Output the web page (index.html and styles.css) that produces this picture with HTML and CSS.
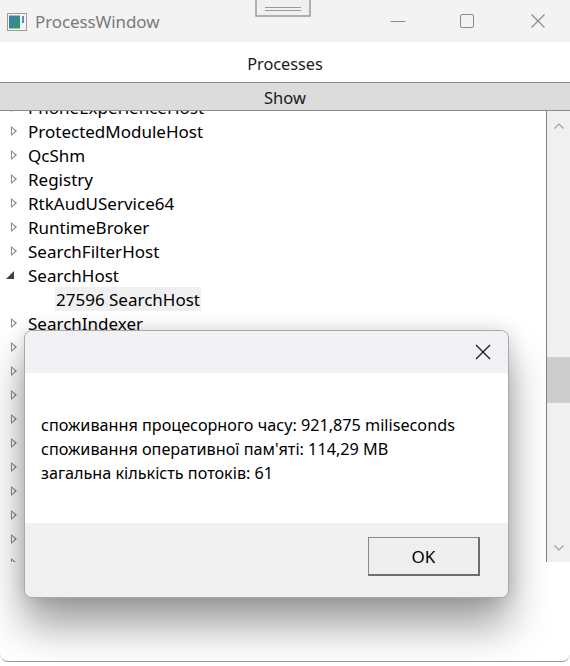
FILE: index.html
```html
<!DOCTYPE html>
<html>
<head>
<meta charset="utf-8">
<link rel="stylesheet" href="styles.css">
</head>
<body>
<div class="window">
  <div class="titlebar">
    <div class="app-icon">
      <svg width="20" height="18" viewBox="0 0 20 18">
        <rect x="0.5" y="0.5" width="19" height="17" fill="#f4f4f4" stroke="#9a9a9a"/>
        <defs><linearGradient id="g" x1="0" y1="0" x2="1" y2="1"><stop offset="0" stop-color="#3b7fb8"/><stop offset="1" stop-color="#2f9a5a"/></linearGradient></defs>
        <rect x="2" y="2.5" width="11" height="13" fill="url(#g)"/>
        <rect x="15" y="3" width="2" height="7" fill="#5a8fc0"/>
      </svg>
    </div>
    <div class="title">ProcessWindow</div>
    <div class="controls">
      <div class="ctl min"><svg width="16" height="16" viewBox="0 0 16 16"><path d="M0.5 8.5h15" stroke="#8a8a8a" stroke-width="1"/></svg></div>
      <div class="ctl max"><svg width="16" height="16" viewBox="0 0 16 16"><rect x="1.5" y="1.5" width="13" height="13" rx="1.5" fill="none" stroke="#8a8a8a" stroke-width="1"/></svg></div>
      <div class="ctl close"><svg width="16" height="16" viewBox="0 0 16 16"><path d="M1.5 1.5l13 13M14.5 1.5l-13 13" stroke="#8a8a8a" stroke-width="1.1"/></svg></div>
    </div>
  </div>
  <div class="snap">
    <svg width="56" height="18" viewBox="0 0 56 18"><rect x="1" y="-2" width="54" height="18" fill="#f0f0f3" stroke="#9a9a9a" stroke-width="1.5"/><path d="M10 7.5h36M10 10.5h36" stroke="#9a9a9a" stroke-width="1.2"/></svg>
  </div>
  <div class="header">Processes</div>
  <div class="showbtn">Show</div>
  <div class="main">
    <div class="tree">
      <div class="rows">
        <div class="row"><span class="exp"></span>PhoneExperienceHost</div>
        <div class="row"><span class="exp"></span>ProtectedModuleHost</div>
        <div class="row"><span class="exp"></span>QcShm</div>
        <div class="row"><span class="exp"></span>Registry</div>
        <div class="row"><span class="exp"></span>RtkAudUService64</div>
        <div class="row"><span class="exp"></span>RuntimeBroker</div>
        <div class="row"><span class="exp"></span>SearchFilterHost</div>
        <div class="row"><span class="exp open"></span>SearchHost</div>
        <div class="row child"><span class="sel">27596 SearchHost</span></div>
        <div class="row"><span class="exp"></span>SearchIndexer</div>
        <div class="row"><span class="exp"></span></div>
        <div class="row"><span class="exp"></span></div>
        <div class="row"><span class="exp"></span></div>
        <div class="row"><span class="exp"></span></div>
        <div class="row"><span class="exp"></span></div>
        <div class="row"><span class="exp"></span></div>
        <div class="row"><span class="exp"></span></div>
        <div class="row"><span class="exp"></span></div>
        <div class="row"><span class="exp"></span></div>
        <div class="row"><span class="exp"></span></div>
        <div class="row"><span class="exp"></span></div>
      </div>
    </div>
    <div class="scrollbar">
      <div class="arrow up"><svg width="10" height="6" viewBox="0 0 10 6"><path d="M0.5 5.5L5 1l4.5 4.5" fill="none" stroke="#a0a0a0" stroke-width="1.1"/></svg></div>
      <div class="track">
        <div class="thumb"></div>
      </div>
      <div class="arrow down"><svg width="10" height="6" viewBox="0 0 10 6"><path d="M0.5 0.5L5 5l4.5-4.5" fill="none" stroke="#a0a0a0" stroke-width="1.1"/></svg></div>
    </div>
  </div>
  <div class="filler"></div>

  <div class="dialog">
    <div class="dlg-title">
      <div class="dlg-close"><svg width="16" height="16" viewBox="0 0 16 16"><path d="M1 1l14 14M15 1L1 15" stroke="#1a1a1a" stroke-width="1.3"/></svg></div>
    </div>
    <div class="dlg-body">
      <div>споживання процесорного часу: 921,875 miliseconds</div>
      <div>споживання оперативної пам'яті: 114,29 MB</div>
      <div>загальна кількість потоків: 61</div>
    </div>
    <div class="dlg-foot">
      <div class="okbtn">OK</div>
    </div>
  </div>
</div>
</body>
</html>
```
FILE: styles.css
```css
* { box-sizing: border-box; }
html, body { margin: 0; padding: 0; background: #ffffff; }
body {
  font-family: "Noto Sans", "Open Sans", sans-serif;
  font-size: 15px;
  color: #000;
  width: 570px;
  height: 666px;
  overflow: hidden;
}
.window {
  position: relative;
  width: 570px;
  height: 662px;
  border-bottom: 1px solid #9a9a9a;
  border-radius: 0 0 8px 8px;
  background: #ffffff;
  display: flex;
  flex-direction: column;
  overflow: hidden;
}
.titlebar {
  height: 42px;
  flex: none;
  background: #f3f3f3;
  display: flex;
  align-items: center;
}
.app-icon { width: 20px; height: 18px; margin-left: 7px; margin-top: 1px; display: flex; }
.title {
  margin-left: 8px;
  font-size: 17px;
  color: #7a7a7a;
  letter-spacing: -0.1px;
}
.controls { margin-left: auto; display: flex; height: 42px; }
.ctl { width: 46px; height: 42px; display: flex; align-items: center; justify-content: center; }
.ctl.min { margin-right: 23px; }
.ctl.max { margin-right: 25px; }
.ctl.close { margin-right: 9px; }
.snap { position: absolute; left: 255px; top: 0; width: 56px; height: 18px; }
.header {
  height: 40px;
  flex: none;
  display: flex;
  align-items: center;
  justify-content: center;
  padding-top: 4px;
  font-size: 16.3px;
  color: #1a1a1a;
}
.showbtn {
  height: 29px;
  flex: none;
  background: #dcdcdc;
  border-top: 1px solid #8c8c8c;
  border-bottom: 1px solid #8c8c8c;
  display: flex;
  align-items: center;
  justify-content: center;
  padding-top: 2px;
  font-size: 16.5px;
  color: #1a1a1a;
}
.main {
  height: 451px;
  flex: none;
  display: flex;
}
.tree { flex: 1; overflow: hidden; position: relative; }
.rows { margin-top: -16px; }
.row {
  height: 24px;
  display: flex;
  align-items: center;
  padding-left: 11px;
  font-size: 17px;
  white-space: nowrap;
  color: #000;
}
.exp {
  width: 0; height: 0;
  margin-right: 11px;
  position: relative;
  border-top: 5px solid transparent;
  border-bottom: 5px solid transparent;
  border-left: 6px solid #8a8a8a;
}
.exp::after {
  content: "";
  position: absolute;
  left: -5px; top: -3px;
  border-top: 3px solid transparent;
  border-bottom: 3px solid transparent;
  border-left: 3.6px solid #ffffff;
}
.exp.open {
  border: none;
  width: 8px; height: 8px;
  margin-left: -5px;
  margin-right: 14px;
  background: #404040;
  clip-path: polygon(100% 0, 100% 100%, 0 100%);
}
.exp.open::after { display: none; }
.row.child { padding-left: 55px; }
.sel {
  background: #f0f0f0;
  height: 24px;
  display: flex;
  align-items: center;
  padding: 0 1px;
}
.scrollbar {
  width: 24px;
  flex: none;
  border-left: 1px solid #828282;
  background: #f0f0f0;
  display: flex;
  flex-direction: column;
}
.arrow { height: 28px; display: flex; align-items: center; justify-content: center; flex: none; }
.arrow.up { padding-top: 2px; }
.track { flex: 1; position: relative; }
.thumb { position: absolute; left: 0; right: 0; top: 218px; height: 46px; background: #cdcdcd; }
.filler { flex: 1; }

.dialog {
  position: absolute;
  left: 24px;
  top: 330px;
  width: 485px;
  height: 268px;
  border: 1px solid #a8a8a8;
  border-radius: 8px;
  overflow: hidden;
  display: flex;
  flex-direction: column;
  box-shadow: 0 28px 42px rgba(0,0,0,0.38), 0 0 18px rgba(0,0,0,0.14);
  background: #f0f0f0;
}
.dlg-title {
  height: 42px;
  flex: none;
  background: #f1f1f6;
  display: flex;
  align-items: center;
  justify-content: flex-end;
  padding-right: 17px;
}
.dlg-close { width: 16px; height: 16px; display: flex; }
.dlg-body {
  height: 150px;
  flex: none;
  background: #ffffff;
  padding: 40px 0 0 16px;
  font-size: 16.2px;
  line-height: 24px;
  color: #000;
}
.dlg-foot {
  flex: 1;
  background: #f0f0f0;
  display: flex;
  justify-content: flex-end;
  padding: 14px 28px 0 0;
}
.okbtn {
  width: 112px;
  height: 39px;
  background: #efefef;
  border: 1px solid #adadad;
  border-right: 2px solid #6e6e6e;
  border-bottom: 2px solid #6e6e6e;
  border-top-color: #8a8a8a;
  border-left-color: #8a8a8a;
  display: flex;
  align-items: center;
  justify-content: center;
  font-size: 17px;
  color: #000;
}
```
